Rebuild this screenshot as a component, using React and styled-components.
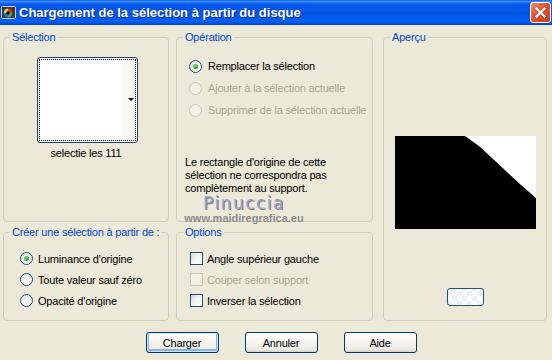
import React from 'react';
import styled, { createGlobalStyle } from 'styled-components';

const GlobalStyle = createGlobalStyle`
  html, body {
    margin: 0;
    padding: 0;
    background: #ECE9D8;
  }
  body {
    font-family: "Liberation Sans", Arial, sans-serif;
    font-size: 11px;
    letter-spacing: -0.2px;
    color: #000;
  }
`;

const Window = styled.div`
  position: relative;
  width: 552px;
  height: 360px;
  background: #ECE9D8;
  overflow: hidden;
`;

const TitleBar = styled.div`
  height: 25px;
  box-sizing: border-box;
  display: flex;
  align-items: center;
  padding: 0 1px 0 1px;
  background: linear-gradient(
    to bottom,
    #0B62F0 0%,
    #3A8CFB 6%,
    #0758EC 16%,
    #0054E3 55%,
    #0060F6 85%,
    #0046D0 100%
  );
`;

const TitleText = styled.div`
  flex: 1;
  margin-left: 3px;
  color: #fff;
  font-size: 13px;
  font-weight: bold;
  letter-spacing: 0;
  text-shadow: 1px 1px 0 #0A2F9E;
`;

const CloseButton = styled.div`
  width: 21px;
  height: 21px;
  box-sizing: border-box;
  border: 1px solid #fff;
  border-radius: 3px;
  background: linear-gradient(135deg, #F08C6C 0%, #E0542F 45%, #C5401C 100%);
  display: flex;
  align-items: center;
  justify-content: center;
`;

const Main = styled.div`
  display: grid;
  grid-template-columns: 166px 197px 167px;
  grid-template-rows: 191px 95px;
  column-gap: 7px;
  row-gap: 4px;
  padding: 6px 0 0 3px;
`;

const Group = styled.fieldset`
  margin: 0;
  padding: 0;
  min-width: 0;
  border: 1px solid #D0D0BF;
  border-radius: 4px;
  grid-column: ${p => p.$col};
  grid-row: ${p => p.$row};
  margin-left: ${p => p.$shift || 0}px;
`;

const Legend = styled.legend`
  margin-left: 6px;
  padding: 0 2px;
  color: #0046D5;
  line-height: 13px;
`;

const Body = styled.div`
  display: flex;
  flex-direction: column;
  align-items: ${p => p.$align || 'stretch'};
  padding: ${p => p.$pad};
`;

const SelectBox = styled.div`
  position: relative;
  width: 101px;
  height: 86px;
  box-sizing: border-box;
  border: 1px solid #1C3F6E;
  border-radius: 3px;
  background: #fff;
  padding: 1px;
  margin-left: 33px;
  margin-top: 13px;
`;

const FocusRect = styled.div`
  width: 100%;
  height: 100%;
  box-sizing: border-box;
  border: 1px dotted #000;
  background: linear-gradient(to right, #fff 0%, #fff 86%, #F8F8F5 88%, #F8F8F5 100%);
`;

const DropArrow = styled.div`
  position: absolute;
  right: 3px;
  top: 40px;
  width: 0;
  height: 0;
  border-left: 3px solid transparent;
  border-right: 3px solid transparent;
  border-top: 3px solid #000;
`;

const BoxLabel = styled.div`
  margin-top: 4px;
  width: 164px;
  text-align: center;
  line-height: 13px;
`;

const Choice = styled.div`
  display: flex;
  align-items: center;
  gap: ${p => p.$gap}px;
  height: ${p => p.$h}px;
  color: ${p => (p.$disabled ? '#ACA899' : '#000')};
  white-space: nowrap;
`;

const Radio = styled.span`
  width: 13px;
  height: 13px;
  box-sizing: border-box;
  border-radius: 50%;
  flex-shrink: 0;
  border: 1px solid ${p => (p.$disabled ? '#CAC8BB' : '#1C5180')};
  background: ${p =>
    p.$disabled ? '#F3F1E6' : 'linear-gradient(135deg, #DCD9CD 0%, #F4F3EE 45%, #FFFFFF 100%)'};
  display: flex;
  align-items: center;
  justify-content: center;

  &::after {
    content: '';
    display: ${p => (p.$checked ? 'block' : 'none')};
    width: 5px;
    height: 5px;
    border-radius: 50%;
    background: radial-gradient(circle at 35% 35%, #7BE37B 0%, #2DAA2D 60%, #1A8A1A 100%);
  }
`;

const Check = styled.span`
  width: 13px;
  height: 13px;
  box-sizing: border-box;
  flex-shrink: 0;
  border: 1px solid ${p => (p.$disabled ? '#CAC8BB' : '#1C5180')};
  background: ${p =>
    p.$disabled ? '#F3F1E6' : 'linear-gradient(135deg, #DCD9CD 0%, #F4F3EE 45%, #FFFFFF 100%)'};
`;

const Note = styled.p`
  margin: 35px 0 0 8px;
  line-height: 13px;
`;

const Preview = styled.svg`
  display: block;
  margin-top: 92px;
`;

const SmallButton = styled.div`
  width: 37px;
  height: 18px;
  box-sizing: border-box;
  margin-top: 59px;
  border: 1px solid #1C5180;
  border-radius: 3px;
  background-color: #FAFAF8;
  background-image: conic-gradient(#EFEFEF 25%, #FFFFFF 0 50%, #EFEFEF 0 75%, #FFFFFF 0);
  background-size: 10px 10px;
  background-position: 4px 2px;
`;

const ButtonRow = styled.div`
  display: flex;
  justify-content: center;
  gap: 26px;
  padding: 11px 0 0 10px;
`;

const Button = styled.button`
  width: 73px;
  height: 21px;
  box-sizing: border-box;
  padding: 0;
  border: 1px solid #003C74;
  border-radius: 3px;
  background: linear-gradient(to bottom, #FFFFFF 0%, #F5F4EF 45%, #ECEBE6 85%, #D6D0C5 100%);
  font-family: "Liberation Sans", Arial, sans-serif;
  font-size: 11px;
  letter-spacing: -0.2px;
  color: #000;
  box-shadow: ${p =>
    p.$default ? 'inset 0 0 0 1px #CEE7FF, inset 0 -1px 0 2px #8DB2E8' : 'none'};
`;

const Watermark = styled.div`
  position: absolute;
  left: 183px;
  top: 193px;
  display: flex;
  flex-direction: column;
  align-items: center;
  width: 122px;
  pointer-events: none;
`;

const WmName = styled.div`
  font-family: "DejaVu Sans", Verdana, sans-serif;
  font-size: 17px;
  letter-spacing: 1.5px;
  line-height: 20px;
  color: #A4A4BC;
  text-shadow: 1px 1px 0 #7A7A8A, -1px -1px 0 #E8E8EE;
`;

const WmUrl = styled.div`
  font-family: "Liberation Sans", Arial, sans-serif;
  font-size: 11px;
  font-weight: bold;
  letter-spacing: 0;
  line-height: 11px;
  color: #8C8C8C;
`;

const AppIcon = () => (
  <svg width="15" height="15" viewBox="0 0 15 15">
    <rect x="0.5" y="1.5" width="14" height="12" rx="1" fill="#3A3A3A" stroke="#CFCFCF" />
    <circle cx="7" cy="8" r="4.5" fill="#1A1A1A" />
    <path d="M7 3.5 A4.5 4.5 0 0 1 11.5 8 L7 8 Z" fill="#E23B3B" />
    <path d="M11.5 8 A4.5 4.5 0 0 1 7 12.5 L7 8 Z" fill="#2FB84A" />
    <path d="M7 12.5 A4.5 4.5 0 0 1 2.5 8 L7 8 Z" fill="#2F6FE0" />
    <path d="M2.5 8 A4.5 4.5 0 0 1 7 3.5 L7 8 Z" fill="#E8C830" />
    <circle cx="7" cy="8" r="1.8" fill="#111" />
  </svg>
);

export default function App() {
  return (
    <>
      <GlobalStyle />
      <Window>
        <TitleBar>
          <AppIcon />
          <TitleText>Chargement de la sélection à partir du disque</TitleText>
          <CloseButton>
            <svg width="11" height="11" viewBox="0 0 11 11">
              <path d="M1.5 1.5 L9.5 9.5 M9.5 1.5 L1.5 9.5" stroke="#fff" strokeWidth="2.2" strokeLinecap="square" />
            </svg>
          </CloseButton>
        </TitleBar>

        <Main>
          <Group $col="1" $row="1">
            <Legend>Sélection</Legend>
            <Body $align="flex-start">
              <SelectBox>
                <FocusRect />
                <DropArrow />
              </SelectBox>
              <BoxLabel>selectie les 111</BoxLabel>
            </Body>
          </Group>

          <Group $col="2" $row="1">
            <Legend>Opération</Legend>
            <Body $pad="11px 0 0 12px">
              <Choice $h={22} $gap={6}>
                <Radio $checked />
                Remplacer la sélection
              </Choice>
              <Choice $h={22} $gap={6} $disabled>
                <Radio $disabled />
                Ajouter à la sélection actuelle
              </Choice>
              <Choice $h={22} $gap={6} $disabled>
                <Radio $disabled />
                Supprimer de la sélection actuelle
              </Choice>
            </Body>
            <Note>
              Le rectangle d'origine de cette
              <br />
              sélection ne correspondra pas
              <br />
              complètement au support.
            </Note>
          </Group>

          <Group $col="3" $row="1 / span 2" $shift={3}>
            <Legend>Aperçu</Legend>
            <Body $align="center">
              <Preview width="141" height="93" viewBox="0 0 141 93">
                <rect width="141" height="93" fill="#000" />
                <polygon points="70,0 141,0 141,62 126,49 84,10" fill="#fff" />
              </Preview>
              <SmallButton />
            </Body>
          </Group>

          <Group $col="1" $row="2">
            <Legend>Créer une sélection à partir de :</Legend>
            <Body $pad="9px 0 0 16px">
              <Choice $h={21} $gap={5}>
                <Radio $checked />
                Luminance d'origine
              </Choice>
              <Choice $h={21} $gap={5}>
                <Radio />
                Toute valeur sauf zéro
              </Choice>
              <Choice $h={21} $gap={5}>
                <Radio />
                Opacité d'origine
              </Choice>
            </Body>
          </Group>

          <Group $col="2" $row="2">
            <Legend>Options</Legend>
            <Body $pad="9px 0 0 13px">
              <Choice $h={21} $gap={4}>
                <Check />
                Angle supérieur gauche
              </Choice>
              <Choice $h={21} $gap={4} $disabled>
                <Check $disabled />
                Couper selon support
              </Choice>
              <Choice $h={21} $gap={4}>
                <Check />
                Inverser la sélection
              </Choice>
            </Body>
          </Group>
        </Main>

        <ButtonRow>
          <Button $default>Charger</Button>
          <Button>Annuler</Button>
          <Button>Aide</Button>
        </ButtonRow>

        <Watermark>
          <WmName>Pinuccia</WmName>
          <WmUrl>www.maidiregrafica.eu</WmUrl>
        </Watermark>
      </Window>
    </>
  );
}
